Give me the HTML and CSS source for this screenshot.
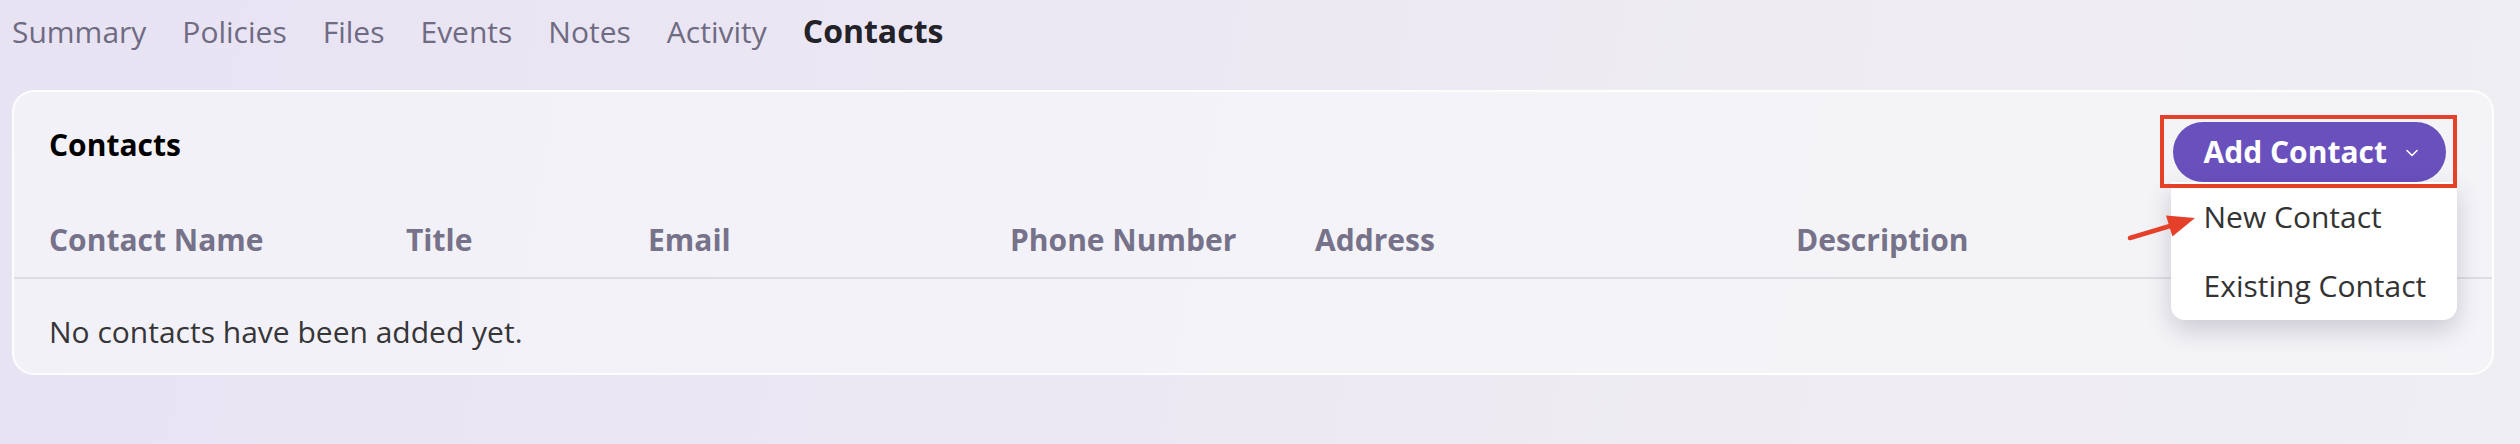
FILE: index.html
```html
<!DOCTYPE html>
<html lang="en">
<head>
<meta charset="utf-8">
<title>Contacts</title>
<link rel="stylesheet" href="styles.css">
</head>
<body>
<div class="page">
  <nav class="tabs">
    <span class="tab">Summary</span>
    <span class="tab">Policies</span>
    <span class="tab">Files</span>
    <span class="tab">Events</span>
    <span class="tab">Notes</span>
    <span class="tab">Activity</span>
    <span class="tab tab-active">Contacts</span>
  </nav>
  <section class="card">
    <div class="card-header">
      <h2 class="card-title">Contacts</h2>
      <div class="add-wrap">
        <button class="add-btn">Add Contact
          <svg class="chev" width="12" height="8" viewBox="0 0 12 8"><polyline points="1,1.5 6,6.5 11,1.5" fill="none" stroke="#fff" stroke-width="1.6" stroke-linecap="round" stroke-linejoin="round"/></svg>
        </button>
        <div class="menu">
          <div class="menu-item">New Contact</div>
          <div class="menu-item">Existing Contact</div>
        </div>
        <div class="annot-box"></div>
        <svg class="annot-arrow" width="85" height="40" viewBox="0 0 85 40">
          <line x1="10" y1="33" x2="50" y2="21" stroke="#e5402a" stroke-width="4.5" stroke-linecap="round"/>
          <polygon points="75,13 52.4,31.4 46,10.4" fill="#e5402a"/>
        </svg>
      </div>
    </div>
    <div class="table-head">
      <div class="th">Contact Name</div>
      <div class="th">Title</div>
      <div class="th">Email</div>
      <div class="th">Phone Number</div>
      <div class="th">Address</div>
      <div class="th">Description</div>
    </div>
    <div class="empty">No contacts have been added yet.</div>
  </section>
</div>
</body>
</html>
```
FILE: styles.css
```css
html, body {
  margin: 0;
  height: 100%;
}
body {
  font-family: "Open Sans", "Noto Sans", sans-serif;
  background: linear-gradient(100deg, #e8e3f3 0%, #ebe7f3 40%, #efedf2 75%, #efeef3 100%);
  overflow: hidden;
}
.page {
  padding: 0 26px 0 12px;
}
.tabs {
  display: flex;
  align-items: baseline;
  gap: 36px;
  padding-top: 11px;
  height: 40px;
}
.tab {
  font-size: 30px;
  line-height: 40px;
  color: #6f6b82;
}
.tab-active {
  font-size: 32px;
  font-weight: 700;
  color: #232228;
}
.card {
  margin-top: 39px;
  border: 2px solid rgba(255, 255, 255, 0.85);
  border-radius: 22px;
  background: rgba(247, 246, 249, 0.7);
}
.card-header {
  display: flex;
  justify-content: space-between;
  align-items: flex-start;
  padding: 30px 46px 0 35px;
}
.card-title {
  margin: 0;
  padding-top: 3px;
  font-size: 30px;
  line-height: 40px;
  font-weight: 700;
  color: #000;
}
.add-wrap {
  position: relative;
}
.add-btn {
  display: flex;
  align-items: center;
  gap: 19px;
  height: 60px;
  padding: 0 28px 0 31px;
  border: none;
  border-radius: 30px;
  background: #6a50bd;
  color: #fff;
  font-family: "Open Sans", "Noto Sans", sans-serif;
  font-size: 30px;
  font-weight: 700;
  line-height: 60px;
}
.chev {
  margin-top: 2px;
}
.menu {
  position: absolute;
  left: -2px;
  top: 60px;
  width: 286px;
  background: #fff;
  border-radius: 0 0 14px 14px;
  box-shadow: 0 10px 26px rgba(40, 30, 60, 0.2);
  z-index: 2;
}
.menu-item {
  padding-left: 33px;
  height: 69px;
  line-height: 69px;
  font-size: 30px;
  color: #333333;
}
.annot-box {
  position: absolute;
  left: -13px;
  top: -7px;
  width: 297px;
  height: 73px;
  box-sizing: border-box;
  border: 4px solid #e5402a;
  z-index: 3;
}
.annot-arrow {
  position: absolute;
  left: -53px;
  top: 83px;
  z-index: 3;
}
.table-head {
  display: grid;
  grid-template-columns: 357px 242px 362px 305px 481px 1fr;
  padding: 38px 35px 17px;
  border-bottom: 2px solid #dfdde4;
}
.th {
  font-size: 30px;
  line-height: 40px;
  font-weight: 700;
  color: #76728a;
}
.empty {
  padding: 33px 35px 21px;
  font-size: 30px;
  line-height: 40px;
  color: #363538;
}
```
